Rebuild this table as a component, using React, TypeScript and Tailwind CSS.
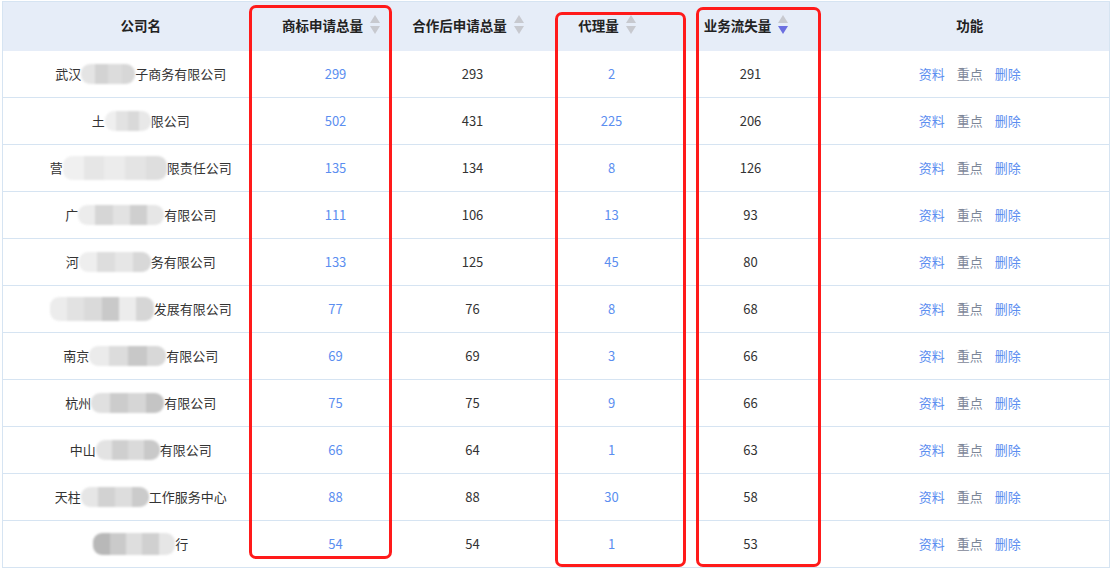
import React from "react";

type Blur = { w: number; shades: string[]; h?: number };

const rows: {
  pre: string;
  blur: Blur;
  post: string;
  a: number;
  b: number;
  c: number;
  d: number;
}[] = [
  { pre: "武汉", blur: { w: 54, shades: ["#e4e4e4", "#d3d3d3", "#dcdcdc", "#d7d7d7"] }, post: "子商务有限公司", a: 299, b: 293, c: 2, d: 291 },
  { pre: "土", blur: { w: 46, shades: ["#efefef", "#e2e2e2", "#d9d9d9", "#e8e8e8"] }, post: "限公司", a: 502, b: 431, c: 225, d: 206 },
  { pre: "营", blur: { w: 104, shades: ["#f0f0f0", "#e6e6e6", "#ececec", "#e4e4e4", "#dedede"], h: 24 }, post: "限责任公司", a: 135, b: 134, c: 8, d: 126 },
  { pre: "广", blur: { w: 86, shades: ["#ececec", "#d6d6d6", "#e2e2e2", "#cfcfcf", "#e6e6e6"] }, post: "有限公司", a: 111, b: 106, c: 13, d: 93 },
  { pre: "河", blur: { w: 72, shades: ["#eeeeee", "#dddddd", "#e6e6e6", "#d8d8d8"] }, post: "务有限公司", a: 133, b: 125, c: 45, d: 80 },
  { pre: "", blur: { w: 104, shades: ["#ececec", "#e2e2e2", "#dadada", "#c9c9c9", "#ececec", "#d6d6d6"], h: 24 }, post: "发展有限公司", a: 77, b: 76, c: 8, d: 68 },
  { pre: "南京", blur: { w: 77, shades: ["#ebebeb", "#dcdcdc", "#c8c8c8", "#d8d8d8"] }, post: "有限公司", a: 69, b: 69, c: 3, d: 66 },
  { pre: "杭州", blur: { w: 73, shades: ["#e0e0e0", "#cccccc", "#d6d6d6", "#c4c4c4"] }, post: "有限公司", a: 75, b: 75, c: 9, d: 66 },
  { pre: "中山", blur: { w: 64, shades: ["#e3e3e3", "#cfcfcf", "#dadada", "#c9c9c9"] }, post: "有限公司", a: 66, b: 64, c: 1, d: 63 },
  { pre: "天柱", blur: { w: 68, shades: ["#e6e6e6", "#d2d2d2", "#dddddd", "#cbcbcb"] }, post: "工作服务中心", a: 88, b: 88, c: 30, d: 58 },
  { pre: "", blur: { w: 82, shades: ["#b8b8b8", "#cacaca", "#dedede", "#d0d0d0", "#e6e6e6"], h: 22 }, post: "行", a: 54, b: 54, c: 1, d: 53 },
];

function BlurBox({ b }: { b: Blur }) {
  return (
    <span
      className="inline-flex overflow-hidden rounded-[9px] blur-[1px]"
      style={{ width: b.w, height: b.h ?? 20 }}
    >
      {b.shades.map((s, i) => (
        <span key={i} className="h-full flex-1" style={{ background: s }} />
      ))}
    </span>
  );
}

function SortIcon({ active }: { active?: boolean }) {
  return (
    <svg width="12" height="22" viewBox="0 0 12 22" className="ml-[6px] shrink-0">
      <polygon points="6,1 11,9 1,9" fill="#c7c9cf" />
      <polygon points="1,12 11,12 6,20" fill={active ? "#6b6fe0" : "#c7c9cf"} />
    </svg>
  );
}

function Head({ label, sort, active }: { label: string; sort?: boolean; active?: boolean }) {
  return (
    <th className="p-0 font-bold">
      <div className={"flex items-center justify-center pb-[3px] " + (sort ? "pr-[8px]" : "")}>
        <span>{label}</span>
        {sort && <SortIcon active={active} />}
      </div>
    </th>
  );
}

export default function App() {
  const font = { fontFamily: '"Noto Sans CJK SC", "Microsoft YaHei", sans-serif' };
  return (
    <div className="relative h-[569px] w-[1114px] bg-white" style={font}>
      <div className="pl-[2px] pt-[1px]">
        <table className="w-[1107px] table-fixed border-collapse text-[13px] text-[#333]">
          <colgroup>
            <col className="w-[276px]" />
            <col className="w-[114px]" />
            <col className="w-[160px]" />
            <col className="w-[118px]" />
            <col className="w-[160px]" />
            <col className="w-[279px]" />
          </colgroup>
          <thead>
            <tr className="h-[49px] border-x border-t border-[#d6e4f2] bg-[#e6edf8] text-[13.5px] text-[#222]">
              <Head label="公司名" />
              <Head label="商标申请总量" sort />
              <Head label="合作后申请总量" sort />
              <Head label="代理量" sort />
              <Head label="业务流失量" sort active />
              <Head label="功能" />
            </tr>
          </thead>
          <tbody>
            {rows.map((r, i) => (
              <tr key={i} className="h-[47px] border-x border-b border-[#d6e4f2]">
                <td className="p-0">
                  <div className="flex items-center justify-center">
                    {r.pre && <span>{r.pre}</span>}
                    <BlurBox b={r.blur} />
                    <span>{r.post}</span>
                  </div>
                </td>
                <td className="p-0 text-center text-[#5b8ef0]">{r.a}</td>
                <td className="p-0 text-center">{r.b}</td>
                <td className="p-0 text-center text-[#5b8ef0]">{r.c}</td>
                <td className="p-0 text-center">{r.d}</td>
                <td className="p-0">
                  <div className="flex items-center justify-center gap-[12px]">
                    <span className="text-[#5b8ef0]">资料</span>
                    <span className="text-[#7d8799]">重点</span>
                    <span className="text-[#5b8ef0]">删除</span>
                  </div>
                </td>
              </tr>
            ))}
          </tbody>
        </table>
      </div>
      <div className="pointer-events-none absolute left-[249px] top-[5px] h-[554px] w-[143px] rounded-[7px] border-[3px] border-[#ff1a1a]" />
      <div className="pointer-events-none absolute left-[555px] top-[12px] h-[555px] w-[131px] rounded-[7px] border-[3px] border-[#ff1a1a]" />
      <div className="pointer-events-none absolute left-[696px] top-[7px] h-[560px] w-[125px] rounded-[7px] border-[3px] border-[#ff1a1a]" />
    </div>
  );
}
